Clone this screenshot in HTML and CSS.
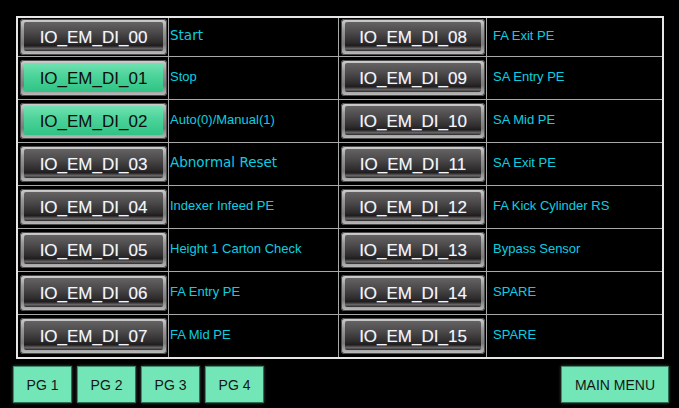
FILE: index.html
```html
<!DOCTYPE html>
<html>
<head>
<meta charset="utf-8">
<link rel="stylesheet" href="styles.css">
</head>
<body>
<div class="screen">
  <div class="table">
    <div class="cell bcell"><div class="btn"><div class="face">IO_EM_DI_00</div></div></div>
    <div class="cell lbl lbl-l big">Start</div>
    <div class="cell bcell"><div class="btn"><div class="face">IO_EM_DI_08</div></div></div>
    <div class="cell lbl lbl-r">FA Exit PE</div>

    <div class="cell bcell"><div class="btn on"><div class="face">IO_EM_DI_01</div></div></div>
    <div class="cell lbl lbl-l">Stop</div>
    <div class="cell bcell"><div class="btn"><div class="face">IO_EM_DI_09</div></div></div>
    <div class="cell lbl lbl-r">SA Entry PE</div>

    <div class="cell bcell"><div class="btn on"><div class="face">IO_EM_DI_02</div></div></div>
    <div class="cell lbl lbl-l">Auto(0)/Manual(1)</div>
    <div class="cell bcell"><div class="btn"><div class="face">IO_EM_DI_10</div></div></div>
    <div class="cell lbl lbl-r">SA Mid PE</div>

    <div class="cell bcell"><div class="btn"><div class="face">IO_EM_DI_03</div></div></div>
    <div class="cell lbl lbl-l big">Abnormal Reset</div>
    <div class="cell bcell"><div class="btn"><div class="face">IO_EM_DI_11</div></div></div>
    <div class="cell lbl lbl-r">SA Exit PE</div>

    <div class="cell bcell"><div class="btn"><div class="face">IO_EM_DI_04</div></div></div>
    <div class="cell lbl lbl-l">Indexer Infeed PE</div>
    <div class="cell bcell"><div class="btn"><div class="face">IO_EM_DI_12</div></div></div>
    <div class="cell lbl lbl-r">FA Kick Cylinder RS</div>

    <div class="cell bcell"><div class="btn"><div class="face">IO_EM_DI_05</div></div></div>
    <div class="cell lbl lbl-l">Height 1 Carton Check</div>
    <div class="cell bcell"><div class="btn"><div class="face">IO_EM_DI_13</div></div></div>
    <div class="cell lbl lbl-r">Bypass Sensor</div>

    <div class="cell bcell"><div class="btn"><div class="face">IO_EM_DI_06</div></div></div>
    <div class="cell lbl lbl-l">FA Entry PE</div>
    <div class="cell bcell"><div class="btn"><div class="face">IO_EM_DI_14</div></div></div>
    <div class="cell lbl lbl-r">SPARE</div>

    <div class="cell bcell"><div class="btn"><div class="face">IO_EM_DI_07</div></div></div>
    <div class="cell lbl lbl-l">FA Mid PE</div>
    <div class="cell bcell"><div class="btn"><div class="face">IO_EM_DI_15</div></div></div>
    <div class="cell lbl lbl-r">SPARE</div>
  </div>
  <div class="nav">
    <div class="navbtn pg">PG 1</div>
    <div class="navbtn pg">PG 2</div>
    <div class="navbtn pg">PG 3</div>
    <div class="navbtn pg">PG 4</div>
    <div class="navbtn main">MAIN MENU</div>
  </div>
</div>
</body>
</html>
```
FILE: styles.css
```css
html, body {
  margin: 0;
  padding: 0;
  background: #000;
}
.screen {
  width: 679px;
  height: 408px;
  box-sizing: border-box;
  padding: 16px 0 0 0;
  font-family: "Liberation Sans", Arial, sans-serif;
}
.table {
  margin-left: 16px;
  width: 648px;
  height: 343px;
  box-sizing: border-box;
  border: 2px solid #e6e6e6;
  background: #a8a8a8;
  display: grid;
  grid-template-columns: 150px 169px 147px 175px;
  grid-template-rows: 38px repeat(7, 1fr);
  gap: 1px;
}
.cell {
  background: #000;
  display: flex;
  align-items: center;
  min-width: 0;
}
.bcell {
  padding: 0 1px 0 2px;
}
.btn {
  flex: 1;
  height: 36px;
  box-sizing: border-box;
  border-radius: 4px;
  padding: 3px 4px 4px 4px;
  background: linear-gradient(#d2d2d2 0%, #9a9a9a 30%, #7a7a7a 70%, #c0c0c0 100%);
  box-shadow: inset 0 0 0 1px #4a4a4a;
}
.face {
  height: 100%;
  border-radius: 2px;
  background: linear-gradient(#646262 0%, #4c4a4a 35%, #2e2c2c 70%, #1e1c1c 82%, #6a6868 92%, #2a2828 100%);
  display: flex;
  align-items: center;
  justify-content: center;
  color: #f6f6f6;
  font-size: 17px;
  line-height: 1;
  padding-top: 1px;
  box-sizing: border-box;
  text-shadow: 0 0 1px rgba(160, 190, 255, 0.5);
}
.btn.on .face {
  background: linear-gradient(#72e2b2 0%, #4fd49c 40%, #3ccb8e 75%, #33c285 100%);
  color: #0c0c0c;
  text-shadow: none;
}
.lbl {
  color: #0ccfe0;
  font-size: 13px;
  white-space: nowrap;
  padding-bottom: 4px;
  box-sizing: border-box;
}
.lbl-l {
  padding-left: 1px;
}
.lbl-r {
  padding-left: 6px;
}
.lbl.big {
  font-family: "DejaVu Sans", Verdana, sans-serif;
  font-size: 13.5px;
}
.nav {
  display: flex;
  gap: 5px;
  margin: 7px 10px 0 13px;
}
.navbtn {
  height: 37px;
  box-sizing: border-box;
  background: #72e6b7;
  border: 1px solid #3e8e6c;
  border-bottom-color: #2e6e52;
  border-right-color: #2e6e52;
  box-shadow: 0 0 3px rgba(90, 90, 90, 0.8);
  display: flex;
  align-items: center;
  justify-content: center;
  color: #161616;
  font-size: 14px;
}
.pg {
  width: 59px;
}
.main {
  width: 108px;
  margin-left: auto;
}
```
